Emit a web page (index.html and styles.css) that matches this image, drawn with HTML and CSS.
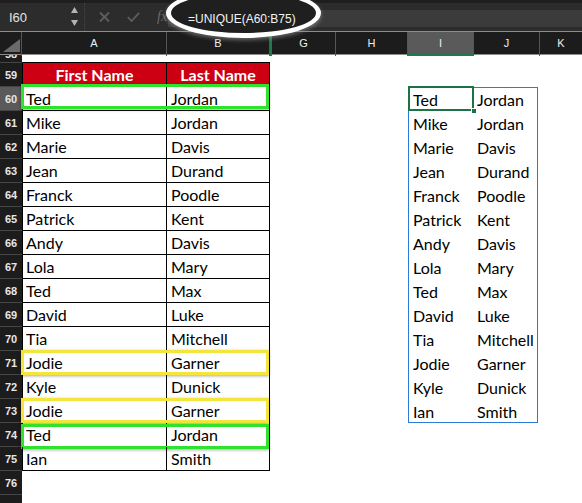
FILE: index.html
```html
<!DOCTYPE html>
<html>
<head>
<meta charset="utf-8">
<link rel="stylesheet" href="styles.css">
</head>
<body>
<div class="toolbar">
  <div class="namebox">
    <span>I60</span>
    <svg class="spin" width="7" height="19" viewBox="0 0 7 19"><polygon points="0,6 3.5,0 7,6"/><polygon points="0,13 7,13 3.5,19"/></svg>
  </div>
  <div class="tools">
    <svg class="tx" width="11" height="10" viewBox="0 0 11 10"><path d="M1 0.5 L10 9.5 M10 0.5 L1 9.5"/></svg>
    <svg class="tok" width="13" height="10" viewBox="0 0 13 10"><path d="M0.8 5 L4.5 9 L12.2 0.8"/></svg>
    <span class="fx">fx</span>
  </div>
  <div class="formula"><span class="ftext">=UNIQUE(A60:B75)</span></div>
  <span class="ellipse"></span>
</div>

<div class="colhdr">
  <div class="ch corner"><svg width="21" height="22" viewBox="0 0 21 22"><polygon points="3,20 20,20 20,7"/></svg></div>
  <div class="ch">A</div>
  <div class="ch">B</div>
  <div class="ch hidden-mark"></div>
  <div class="ch">G</div>
  <div class="ch">H</div>
  <div class="ch sel">I</div>
  <div class="ch">J</div>
  <div class="ch">K</div>
</div>

<div class="sheet">
  <div class="rowhdr">
    <div class="rn first"><span>58</span></div>
    <div class="rn"><span>59</span></div>
    <div class="rn sel"><span>60</span></div>
    <div class="rn"><span>61</span></div>
    <div class="rn"><span>62</span></div>
    <div class="rn"><span>63</span></div>
    <div class="rn"><span>64</span></div>
    <div class="rn"><span>65</span></div>
    <div class="rn"><span>66</span></div>
    <div class="rn"><span>67</span></div>
    <div class="rn"><span>68</span></div>
    <div class="rn"><span>69</span></div>
    <div class="rn"><span>70</span></div>
    <div class="rn"><span>71</span></div>
    <div class="rn"><span>72</span></div>
    <div class="rn"><span>73</span></div>
    <div class="rn"><span>74</span></div>
    <div class="rn"><span>75</span></div>
    <div class="rn"><span>76</span></div>
    <div class="rn"><span>77</span></div>
  </div>

  <div class="cells">
    <div class="tbl">
      <div class="tr head"><div class="td">First Name</div><div class="td">Last Name</div></div>
      <div class="tr hl green up"><div class="td">Ted</div><div class="td">Jordan</div></div>
      <div class="tr"><div class="td">Mike</div><div class="td">Jordan</div></div>
      <div class="tr"><div class="td">Marie</div><div class="td">Davis</div></div>
      <div class="tr"><div class="td">Jean</div><div class="td">Durand</div></div>
      <div class="tr"><div class="td">Franck</div><div class="td">Poodle</div></div>
      <div class="tr"><div class="td">Patrick</div><div class="td">Kent</div></div>
      <div class="tr"><div class="td">Andy</div><div class="td">Davis</div></div>
      <div class="tr"><div class="td">Lola</div><div class="td">Mary</div></div>
      <div class="tr"><div class="td">Ted</div><div class="td">Max</div></div>
      <div class="tr"><div class="td">David</div><div class="td">Luke</div></div>
      <div class="tr"><div class="td">Tia</div><div class="td">Mitchell</div></div>
      <div class="tr hl yellow"><div class="td">Jodie</div><div class="td">Garner</div></div>
      <div class="tr"><div class="td">Kyle</div><div class="td">Dunick</div></div>
      <div class="tr hl yellow"><div class="td">Jodie</div><div class="td">Garner</div></div>
      <div class="tr hl green down"><div class="td">Ted</div><div class="td">Jordan</div></div>
      <div class="tr"><div class="td">Ian</div><div class="td">Smith</div></div>
    </div>

    <div class="gap"></div>

    <div class="spill">
      <div class="sr active"><span>Ted</span><span>Jordan</span></div>
      <div class="sr"><span>Mike</span><span>Jordan</span></div>
      <div class="sr"><span>Marie</span><span>Davis</span></div>
      <div class="sr"><span>Jean</span><span>Durand</span></div>
      <div class="sr"><span>Franck</span><span>Poodle</span></div>
      <div class="sr"><span>Patrick</span><span>Kent</span></div>
      <div class="sr"><span>Andy</span><span>Davis</span></div>
      <div class="sr"><span>Lola</span><span>Mary</span></div>
      <div class="sr"><span>Ted</span><span>Max</span></div>
      <div class="sr"><span>David</span><span>Luke</span></div>
      <div class="sr"><span>Tia</span><span>Mitchell</span></div>
      <div class="sr"><span>Jodie</span><span>Garner</span></div>
      <div class="sr"><span>Kyle</span><span>Dunick</span></div>
      <div class="sr"><span>Ian</span><span>Smith</span></div>
    </div>
  </div>
</div>
</body>
</html>
```

FILE: styles.css
```css
*, *::before, *::after { box-sizing: border-box; margin: 0; padding: 0; }

html, body {
  width: 582px;
  height: 503px;
  overflow: hidden;
  background: #ffffff;
}

body {
  font-family: "Liberation Sans", Arial, sans-serif;
}

/* ---------- formula bar ---------- */
.toolbar {
  position: relative;
  z-index: 2;
  height: 32px;
  display: flex;
  background: #2c2c2c;
  border-top: 3px solid #1e1e1e;
  border-bottom: 1px solid #8c8c8c;
}

.namebox {
  width: 85px;
  display: flex;
  align-items: center;
  justify-content: space-between;
  padding: 0 6px 0 9px;
  color: #e4e4e4;
  font-size: 13px;
  border-right: 1px dotted #474747;
}

.spin { fill: #b4b4b4; margin-top: -1px; }

.tools {
  width: 83px;
  display: flex;
  align-items: center;
  padding-left: 14px;
}

.tx, .tok {
  fill: none;
  stroke: #5f5f5f;
  stroke-width: 1.8;
}

.tx { margin-right: 17px; }
.tok { margin-right: 17px; }

.fx {
  font-family: "Liberation Serif", serif;
  font-style: italic;
  font-size: 14px;
  color: #6a6a6a;
}

.formula {
  flex: 1;
  margin: 7px 0 4px;
  background: #3b3b3b;
  display: flex;
  align-items: center;
  padding-left: 20px;
}

.ftext {
  position: relative;
  z-index: 2;
  color: #f2f2f2;
  font-size: 12px;
}

.ellipse {
  position: absolute;
  z-index: 1;
  left: 166px;
  top: -15px;
  width: 155px;
  height: 50px;
  border: 5px solid #ffffff;
  border-radius: 50%;
  background: #1f1f1f;
  box-shadow: 0 2px 4px rgba(170, 170, 170, 0.55);
}

/* ---------- column header ---------- */
.colhdr {
  display: grid;
  grid-template-columns: 22px 145px 103px 2px 64px 72px 66px 66px 1fr;
  height: 23px;
  background: #1c1c1c;
  border-bottom: 1px solid #8c8c8c;
}

.ch {
  border-right: 1px solid #555555;
  color: #f0f0f0;
  font-size: 11px;
  line-height: 22px;
  text-align: center;
}

.ch:last-child { border-right: 0; }

.ch.corner { position: relative; }
.ch.corner svg { display: block; fill: #6a6a6a; }

.ch.hidden-mark {
  background: #1f7a4b;
  border-right: 0;
}

.ch.sel {
  background: #5a5a5a;
  border-bottom: 2px solid #1f7a4b;
}

/* ---------- sheet ---------- */
.sheet {
  display: flex;
  align-items: flex-start;
}

.rowhdr {
  width: 22px;
  flex: none;
  background: #1c1c1c;
}

.rn {
  height: 24px;
  display: flex;
  align-items: center;
  justify-content: center;
  border-bottom: 1px solid #454545;
  color: #e6e6e6;
  font-size: 11px;
  font-weight: bold;
  overflow: hidden;
}

.rn.first {
  height: 8px;
  align-items: flex-end;
}

.rn.first span {
  display: block;
  line-height: 24px;
  margin-bottom: -4px;
}

.rn.sel { background: #5a5a5a; }

.cells {
  display: flex;
  align-items: flex-start;
  padding-top: 7px;
  font-family: Lato, "Open Sans", sans-serif;
  font-size: 16px;
  color: #000;
}

/* left table */
.tbl {
  width: 248px;
  border-top: 1px solid #000;
}

.tr {
  position: relative;
  display: grid;
  grid-template-columns: 145px 103px;
  height: 24px;
  border-bottom: 1px solid #000;
}

.td {
  border-right: 1px solid #000;
  padding: 1px 0 0 4px;
  line-height: 22px;
  white-space: nowrap;
}

.td:first-child {
  border-left: 1px solid #000;
  padding-left: 3px;
}

.tr.head .td {
  background: #cc0012;
  color: #ffffff;
  font-weight: bold;
  text-align: center;
  padding-left: 0;
}

.tr.hl::after {
  content: "";
  position: absolute;
  left: -1px;
  top: -1px;
  width: 248px;
  height: 25px;
  border: 3px solid;
  box-shadow: 0 1px 3px rgba(0, 0, 0, 0.35);
}

.tr.green::after { border-color: #2ee22e; }
.tr.yellow::after { border-color: #f3e53c; }
.tr.up::after { top: -3px; }
.tr.down::after { top: 1px; }

.gap {
  width: 138px;
  flex: none;
}

/* spill range */
.spill {
  width: 130px;
  margin-top: 25px;
  outline: 1px solid #2c7bd6;
  outline-offset: -1px;
}

.sr {
  position: relative;
  display: grid;
  grid-template-columns: 66px 64px;
  height: 24px;
  padding-top: 1px;
  line-height: 23px;
  white-space: nowrap;
}

.sr span:first-child { padding-left: 5px; }
.sr span:last-child { padding-left: 3px; }

.sr.active::after {
  content: "";
  position: absolute;
  left: 0;
  top: -1px;
  width: 66px;
  height: 25px;
  border: 2px solid #1e7346;
}

.sr.active::before {
  content: "";
  position: absolute;
  z-index: 1;
  left: 63px;
  top: 21px;
  width: 6px;
  height: 6px;
  background: #1e7346;
  border: 1px solid #ffffff;
}
```
